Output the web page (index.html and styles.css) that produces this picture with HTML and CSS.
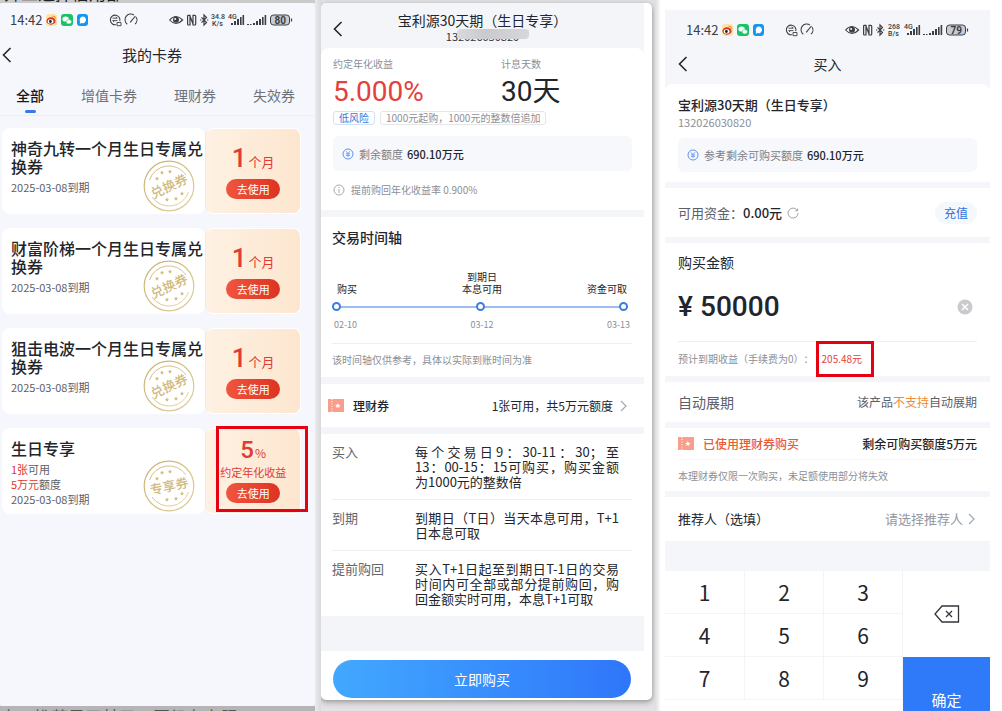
FILE: index.html
```html
<!DOCTYPE html>
<html lang="zh-CN">
<head>
<meta charset="utf-8">
<meta name="viewport" content="width=device-width, initial-scale=1">
<title>我的卡券</title>
<link rel="stylesheet" href="styles.css">
</head>
<body>
<svg class="defs" aria-hidden="true">
  <defs>
    <linearGradient id="gold" x1="0" y1="0" x2="1" y2="1">
      <stop offset="0" stop-color="#c9b173"/><stop offset="1" stop-color="#e0cf9c"/>
    </linearGradient>
    <symbol id="status" viewBox="0 0 250 16">
      <rect x="1" y="2" width="11" height="12" rx="3" fill="#fde3a7"/>
      <ellipse cx="6" cy="9" rx="4.6" ry="3.7" fill="#d9331f"/>
      <ellipse cx="5.6" cy="9.4" rx="2.9" ry="2.2" fill="#fff"/>
      <circle cx="5.4" cy="9.5" r="1.4" fill="#222"/>
      <path d="M7.5 4.2q3-.6 3.3 2.4" fill="none" stroke="#e8882a"/>
      <rect x="16" y="2" width="12" height="12" rx="3" fill="#16c464"/>
      <ellipse cx="20.6" cy="7" rx="3.2" ry="2.6" fill="#fff"/>
      <ellipse cx="23.8" cy="9.8" rx="2.7" ry="2.2" fill="#fff" stroke="#16c464" stroke-width=".5"/>
      <rect x="32" y="2" width="11" height="12" rx="3" fill="#1296f0"/>
      <path d="M37.7 4.6a3.5 3.3 0 1 1-1 6.5l-2 .6.4-2a3.4 3.4 0 0 1 2.6-5.1z" fill="#fff"/>
      <g fill="none" stroke="#3b3e44" stroke-width="1.1">
        <path d="M74.8 9.2A4.8 4.8 0 1 0 71 12.7"/>
        <path d="M67.500 6.200h4.800l-1.500-1.500M72.500 8.600h-4.800l1.500 1.500" stroke-width=".9"/>
        <path d="M72 10.500h4v3.200h-4z" stroke-width=".9"/>
        <path d="M82.300 12.200A5.400 5.400 0 0 1 89 3.100M91 5a5.400 5.400 0 0 1-1 7.200M85.200 10.400 90.400 4"/>
        <path d="M124.600 8Q131 1 137.600 8 131 15 124.600 8z"/>
      </g>
      <circle cx="131" cy="7.8" r="3" fill="#3b3e44"/><circle cx="130.200" cy="7" r="1" fill="#f5f7fb"/>
      <g fill="none" stroke="#3b3e44" stroke-width="1.2">
        <path d="M145 3.300h-1.600q-.8 0-.8.8v8q0 .9.8.9h1.600zM148 3.300h1.800q.9 0 .9.9v7.900q0 .9-.9.9H148zM145 4l3.200 8.500"/>
        <path d="m156.500 5.300 5 5.200-2.500 2.600V3l2.500 2.400-5 5.200" stroke-width="1.2"/>
        <path d="M155 8h1.300M162 8h1.300" stroke-width="1.2"/>
      </g>
      <path d="M186 11h2v2h-2zM189 9h2v4h-2zM192 7h2v6h-2zM195 5h1.600v8H195zM197.500 3h1.600v10h-1.600z" fill="#3b3e44"/>
      <path d="M202 12h2v1h-2zM205 12h1.500v1H205zM208 11h2v2h-2zM211 9h2v4h-2zM214 7h2v6h-2zM217 5h1.600v8H217zM219.600 3h1.600v10h-1.600z" fill="#3b3e44"/>
      <rect x="225.500" y="3" width="19" height="10" rx="3" fill="#c9ccd2" stroke="#3b3e44"/>
      <path d="M246.500 6.500v3" stroke="#3b3e44" stroke-width="1.2"/>
    </symbol>
    <symbol id="back" viewBox="0 0 10 16"><path d="M8.500 1 1.500 8l7 7" fill="none" stroke="#23262c" stroke-width="1.6"/></symbol>
    <symbol id="chevron" viewBox="0 0 8 12"><path d="m1 1 5 5-5 5" fill="none" stroke="#a4a8b0" stroke-width="1.2"/></symbol>
    <symbol id="yuan" viewBox="0 0 12 12">
      <circle cx="6" cy="6" r="5" fill="none" stroke="#5b93ee"/>
      <path d="M4 3.200 6 5.500l2-2.300M6 5.500V9M3.900 5.800h4.200M3.900 7.400h4.200" fill="none" stroke="#5b93ee" stroke-width=".8"/>
    </symbol>
    <symbol id="ticket" viewBox="0 0 16 13">
      <path d="M0 0h3.500v1h1V0H16v13H4.500v-1h-1v1H0z" fill="#f99d8d"/>
      <path d="M4 2v9" stroke="#fff" stroke-dasharray="1 1.500"/>
      <path d="m9.800 4 .8 1.700 1.900.2-1.400 1.300.4 1.900-1.700-1-1.700 1 .4-1.900-1.400-1.300 1.900-.2z" fill="#fff"/>
    </symbol>
    <symbol id="seal" viewBox="0 0 52 52">
      <g fill="none" stroke="url(#gold)">
        <circle cx="26" cy="26" r="24.800" stroke-width="1.200"/>
        <path d="M6.500 20A20.500 20.500 0 0 1 43 15M45.500 32A20.500 20.500 0 0 1 9 37" stroke-width=".9"/>
      </g>
      <g fill="#d2bc82">
        <path id="star" d="m19 10.500.6 1.300 1.400.2-1 1 .2 1.400-1.200-.7-1.200.7.200-1.400-1-1 1.400-.2z"/>
        <use href="#star" x="8" y="-1"/><use href="#star" x="-5" y="6"/>
        <use href="#star" x="14" y="26"/><use href="#star" x="5" y="27"/><use href="#star" x="20" y="21"/>
      </g>
    </symbol>
  </defs>
</svg>

<main class="board">
  <section class="column column-coupons">
    <p class="backdrop backdrop-top" aria-hidden="true">开工选择信用部</p>
    <div class="screen coupons">
      <div class="status"><span>14:42</span>
        <svg viewBox="0 0 250 16"><use href="#status"/><text x="166" y="7">34.8</text><text x="167" y="14">K/s</text><text x="183" y="7">4G</text><text class="charge" x="229.500" y="11.500">80</text></svg>
      </div>
      <header class="bar"><button class="back" aria-label="返回"><svg><use href="#back"/></svg></button><h1>我的卡券</h1></header>
      <nav class="tabs">
        <a class="current" href="#all">全部</a><a href="#value">增值卡券</a><a href="#finance">理财券</a><a href="#expired">失效券</a>
      </nav>
      <ul class="cards">
        <li class="card">
          <div class="card-info"><h2>神奇九转一个月生日专属兑换券</h2><p>2025-03-08到期</p>
            <svg class="seal" viewBox="0 0 52 52"><use href="#seal"/><text x="26" y="31" transform="rotate(-25 26 26)">兑换券</text></svg></div>
          <div class="card-value"><p class="amount"><b>1</b>个月</p><button class="use">去使用</button></div>
        </li>
        <li class="card">
          <div class="card-info"><h2>财富阶梯一个月生日专属兑换券</h2><p>2025-03-08到期</p>
            <svg class="seal" viewBox="0 0 52 52"><use href="#seal"/><text x="26" y="31" transform="rotate(-25 26 26)">兑换券</text></svg></div>
          <div class="card-value"><p class="amount"><b>1</b>个月</p><button class="use">去使用</button></div>
        </li>
        <li class="card">
          <div class="card-info"><h2>狙击电波一个月生日专属兑换券</h2><p>2025-03-08到期</p>
            <svg class="seal" viewBox="0 0 52 52"><use href="#seal"/><text x="26" y="31" transform="rotate(-25 26 26)">兑换券</text></svg></div>
          <div class="card-value"><p class="amount"><b>1</b>个月</p><button class="use">去使用</button></div>
        </li>
        <li class="card">
          <div class="card-info"><h2>生日专享</h2><p><em>1张</em>可用</p><p><em>5万元</em>额度</p><p>2025-03-08到期</p>
            <svg class="seal" viewBox="0 0 52 52"><use href="#seal"/><text x="26" y="31" transform="rotate(-12 26 26)">专享券</text></svg></div>
          <div class="card-value rate marked"><p class="amount"><b>5</b>%</p><p class="caption">约定年化收益</p><button class="use">去使用</button></div>
        </li>
      </ul>
    </div>
    <p class="backdrop backdrop-bottom" aria-hidden="true">水～推荐是无其已；国级左右限</p>
  </section>

  <section class="column column-product">
    <div class="sheet">
      <div class="screen product">
        <header class="bar product-bar"><button class="back" aria-label="返回"><svg><use href="#back"/></svg></button>
          <div><h1>宝利源30天期（生日专享）</h1><p class="code">132026030820</p></div></header>
        <div class="panel summary">
          <dl class="figures">
            <div><dt>约定年化收益</dt><dd class="red">5.000%</dd></div>
            <div><dt>计息天数</dt><dd class="days">30天</dd></div>
          </dl>
          <p class="tags"><span class="tag blue">低风险</span><span class="tag">1000元起购，1000元的整数倍追加</span></p>
          <p class="quota"><svg><use href="#yuan"/></svg><span>剩余额度</span> <b>690.10万元</b></p>
          <p class="hint"><svg viewBox="0 0 12 12"><circle cx="6" cy="6" r="5"/><path d="M6 5v4M6 3v1"/></svg>提前购回年化收益率 0.900%</p>
        </div>
        <div class="panel schedule">
          <h2>交易时间轴</h2>
          <div class="steps"><span>购买</span><span>到期日<br>本息可用</span><span>资金可取</span></div>
          <div class="track"><i></i><i></i><i></i></div>
          <div class="steps dates"><span>02-10</span><span>03-12</span><span>03-13</span></div>
          <p class="note">该时间轴仅供参考，具体以实际到账时间为准</p>
        </div>
        <button class="panel voucher"><svg class="ticket"><use href="#ticket"/></svg><strong>理财券</strong><span>1张可用，共5万元额度</span><svg class="chevron"><use href="#chevron"/></svg></button>
        <dl class="panel rules">
          <div><dt>买入</dt><dd>每个交易日9：30-11：30；至<span class="keep">13：00</span>-15：15可购买，购买金额为1000元的整数倍</dd></div>
          <div><dt>到期</dt><dd>到期日（T日）当天本息可用，T+1日本息可取</dd></div>
          <div><dt>提前购回</dt><dd>买入T+1日起至到期日T-1日的交易时间内可全部或部分提前购回，购回金额实时可用，本息T+1可取</dd></div>
        </dl>
      </div>
      <footer class="footer"><button class="buy">立即购买</button></footer>
    </div>
  </section>

  <section class="column column-order">
    <div class="screen order">
      <div class="status"><span>14:42</span>
        <svg viewBox="0 0 250 16"><use href="#status"/><text x="167" y="7">268</text><text x="167" y="14">B/s</text><text x="183" y="7">4G</text><text class="charge" x="229.500" y="11.500">79</text></svg>
      </div>
      <header class="bar"><button class="back" aria-label="返回"><svg><use href="#back"/></svg></button><h1>买入</h1></header>
      <div class="stack">
        <div class="panel item">
          <h2>宝利源30天期（生日专享）</h2><p class="code">132026030820</p>
          <p class="quota"><svg><use href="#yuan"/></svg><span>参考剩余可购买额度</span> <b>690.10万元</b></p>
        </div>
        <div class="panel row funds"><span>可用资金：</span><b>0.00元</b>
          <svg viewBox="0 0 12 12"><path d="M10.300 3.500A5 5 0 1 0 11 6M10.600 1.500v2.300H8.300"/></svg>
          <button class="recharge">充值</button></div>
        <div class="panel purchase">
          <label for="amount">购买金额</label>
          <div class="entry"><span>¥</span><input id="amount" type="text" inputmode="decimal" value="50000">
            <button class="clear" aria-label="清除"><svg viewBox="0 0 16 16"><circle cx="8" cy="8" r="7.500"/><path d="m5 5 6 6M11 5l-6 6"/></svg></button></div>
          <p class="estimate">预计到期收益（手续费为0）：<span class="marked">205.48元</span></p>
        </div>
        <div class="panel row renewal"><span>自动展期</span><span>该产品<em>不支持</em>自动展期</span></div>
        <div class="panel used">
          <div class="row"><svg class="ticket"><use href="#ticket"/></svg><strong>已使用理财券购买</strong><b>剩余可购买额度5万元</b></div>
          <p>本理财券仅限一次购买，未足额使用部分将失效</p>
        </div>
        <button class="panel row referrer"><span>推荐人（选填）</span><span>请选择推荐人</span><svg class="chevron"><use href="#chevron"/></svg></button>
      </div>
      <div class="keypad">
        <button>1</button><button>2</button><button>3</button>
        <button class="erase" aria-label="删除"><svg viewBox="0 0 26 18"><path d="M8 1h16.500v16H8L1 9z"/><path d="m12 6 6 6M18 6l-6 6"/></svg></button>
        <button>4</button><button>5</button><button>6</button>
        <button class="confirm">确定</button>
        <button>7</button><button>8</button><button>9</button>
      </div>
    </div>
  </section>
</main>
</body>
</html>
```

FILE: styles.css
```css
* { box-sizing: border-box; margin: 0; padding: 0; }
body {
  height: 100vh;
  overflow: hidden;
  background: #fff;
  color: #22252b;
  font: 12px/16px "Noto Sans CJK SC", "Noto Sans", sans-serif;
  text-spacing-trim: space-all;
}
button, input { font: inherit; color: inherit; background: none; border: 0; }
button { cursor: pointer; }
a { color: inherit; text-decoration: none; }
ul { list-style: none; }
em { font-style: normal; }
h1, h2, b, strong { font-weight: 400; }
svg { display: block; flex: none; }
.defs { position: absolute; width: 0; height: 0; }

.board {
  display: grid;
  grid-template-columns: 321fr 334fr 347fr;
  height: 100vh;
}
.column { min-width: 0; height: 100vh; overflow: hidden; }

/* Shared bars */
.status { display: flex; align-items: center; padding-left: 10px; font-size: 13px; color: #3b3e44; }
.status span { width: 35px; }
.status svg { width: 250px; height: 16px; }
.status text { font: 500 7px Roboto, sans-serif; fill: #3b3e44; }
.status .charge { font-size: 10px; font-weight: 700; }
.bar { display: grid; grid-template-columns: 20px 1fr 20px; align-items: center; text-align: center; }
.bar h1 { font-size: 15px; line-height: 20px; }
.back svg { width: 10px; height: 16px; }
.marked { position: relative; }
.marked::after {
  content: "";
  position: absolute;
  border: 3px solid #e60012;
  pointer-events: none;
}
.ticket { width: 16px; height: 13px; }
.chevron { width: 8px; height: 12px; }
.panel { background: #fff; }

/* Coupons */
.column-coupons {
  display: flex;
  flex-direction: column;
  padding-right: 6px;
  background: linear-gradient(90deg, #ececee 98%, #d9d9db);
}
.backdrop { flex: none; overflow: hidden; background: #cbcbcb; color: #555; font-size: 17px; white-space: nowrap; }
.backdrop-top { display: flex; align-items: flex-end; height: 3px; padding-left: 4px; line-height: 20px; color: #222; }
.backdrop-bottom { height: 5px; line-height: 22px; background: #b5b5b5; }
.coupons { flex: 1; background: #f5f7fc; border-radius: 4px; }
.coupons .status { height: 34px; }
.coupons .bar { height: 36px; padding-right: 11px; }
.coupons .back { padding-left: 2px; }
.tabs {
  display: flex;
  justify-content: space-between;
  padding: 12px 20px 0 16px;
  border-bottom: 1px solid #eceef3;
  font-size: 14px;
  line-height: 20px;
  color: #6d717a;
}
.tabs a { display: flex; flex-direction: column; align-items: center; height: 30px; }
.tabs a::after { content: ""; width: 11px; height: 3px; margin-top: 5px; border-radius: 2px; }
.tabs .current { color: #17191e; font-weight: 500; }
.tabs .current::after { background: #3878e8; }
.cards { display: grid; gap: 14px; padding: 12px 14px 0 2px; }
.card { display: grid; grid-template-columns: 204fr 96fr; height: 86px; }
.card-info { position: relative; padding: 11px 0 0 9px; background: #fff; border-radius: 8px; }
.card-info h2 { margin-bottom: 5px; font-size: 16px; font-weight: 500; line-height: 18px; }
.card-info p { font-size: 11px; line-height: 15px; color: #5d6068; }
.card em { color: #e0352c; }
.seal { position: absolute; right: 10px; bottom: 2px; width: 52px; height: 52px; }
.seal text { font-size: 13px; font-weight: 500; fill: #d0b97f; text-anchor: middle; }
.card-value {
  display: flex;
  flex-direction: column;
  align-items: center;
  padding-top: 16px;
  border: 1px solid #fff;
  border-left: 1px dashed #fbe9d6;
  border-radius: 8px;
  background: linear-gradient(90deg, #fef1e3, #fde6cf);
  color: #e23a34;
}
.amount { margin-bottom: 4px; font-size: 13px; line-height: 26px; }
.amount b { margin-right: 2px; font: 500 26px/26px Roboto, sans-serif; }
.use {
  width: 54px;
  height: 20px;
  border-radius: 10px;
  background: linear-gradient(90deg, #f0553f, #dd3322);
  color: #fff;
  font-size: 11px;
  line-height: 18px;
}
.rate { padding-top: 9px; }
.rate .amount { margin: 0; font-size: 12px; line-height: 24px; }
.rate .amount b { margin-right: 1px; font-size: 24px; line-height: 24px; }
.caption { margin-bottom: 4px; font-size: 11px; line-height: 14px; }
.rate::after { inset: -3px -8px 1px 10px; }

/* Product sheet */
.column-product { padding: 3px 3px 5px 0; background: #e3e3e5; }
.sheet {
  display: flex;
  flex-direction: column;
  min-height: 697px;
  border-radius: 5px;
  overflow: hidden;
  background: #fff;
  box-shadow: 0 1px 2px #aaa, 0 2px 6px #999;
}
.product { display: grid; gap: 7px; align-content: start; margin-right: 8px; padding-bottom: 35px; background: #f4f5f9; }
.product-bar { height: 45px; margin-bottom: -7px; padding: 5px 10px 0; align-items: start; }
.product-bar .back { padding: 13px 0 0 2px; }
.product-bar h1 { margin-top: 3px; font-size: 14px; line-height: 18px; }
.product-bar .code { position: relative; color: #33363c; font-size: 11px; line-height: 14px; }
.product-bar .code::after {
  content: "";
  position: absolute;
  left: 50%;
  top: 0;
  width: 72px;
  height: 10px;
  margin-left: -26px;
  border-radius: 4px;
  background: linear-gradient(90deg, #d9dade, #c9cace 40%, #d6d7db);
}
.summary { padding: 9px 12px 13px; border-radius: 8px 8px 0 0; }
.figures { display: grid; grid-template-columns: 168fr 131fr; }
.figures dt { font-size: 10px; line-height: 14px; color: #8b8f97; }
.figures dd { margin-top: 7px; font: 28px/28px Roboto, "Noto Sans CJK SC", sans-serif; white-space: nowrap; }
.red { color: #e5403a; }
.tags { display: flex; gap: 5px; margin-top: 5px; }
.tag { padding: 0 5px; border: 1px solid #e4e6ea; border-radius: 3px; font-size: 10px; line-height: 12px; color: #8b8f97; white-space: nowrap; }
.tag.blue { color: #3475d8; border-color: #d3e1f7; }
.quota { display: flex; align-items: center; height: 35px; padding-left: 9px; border-radius: 6px; background: #f7f8fb; font-size: 11px; }
.quota svg { width: 12px; height: 12px; margin-right: 5px; }
.quota span { margin-right: 4px; color: #7c8089; }
.quota b { font-weight: 500; }
.summary .quota { margin-top: 11px; }
.hint { display: flex; gap: 6px; align-items: center; margin-top: 12px; font-size: 10px; line-height: 14px; color: #8b8f97; }
.hint svg { width: 12px; height: 12px; fill: none; stroke: #a5a9b0; }
.schedule { padding: 10px 12px 0 11px; }
.schedule h2 { font-size: 14px; font-weight: 500; line-height: 20px; }
.steps {
  display: grid;
  grid-template-columns: 1fr auto 1fr;
  align-items: end;
  margin-top: 24px;
  padding: 0 5px;
  font-size: 10px;
  line-height: 12px;
  text-align: center;
}
.steps span:first-child { text-align: left; }
.steps span:last-child { text-align: right; }
.track { display: flex; justify-content: space-between; margin: 7px 4px 0 0; background: linear-gradient(#9cbcf2, #9cbcf2) center / 100% 2px no-repeat; }
.track i { width: 9px; height: 9px; border: 2px solid #3f7ce0; border-radius: 50%; background: #fff; }
.dates { margin-top: 8px; padding: 0 2px; font-size: 9px; color: #8b8f97; }
.note { margin-top: 12px; padding: 9px 0 10px; border-top: 1px solid #eeeff2; font-size: 10px; line-height: 14px; color: #8b8f97; }
.voucher { display: flex; align-items: center; height: 43px; padding: 0 16px 0 7px; text-align: left; }
.voucher strong { margin-left: 9px; font-weight: 500; }
.voucher span { margin-left: auto; margin-right: 7px; }
.rules { padding: 0 12px 0 11px; }
.rules div { display: grid; grid-template-columns: 83fr 204fr; padding: 10px 13px 10px 0; border-bottom: 1px solid #eeeff2; font-size: 13px; line-height: 15px; }
.rules div:last-child { border: 0; }
.rules dt { color: #63666e; }
.rules dd { text-align: justify; }
.keep { white-space: nowrap; }
.footer { padding: 9px 21px 1px 12px; }
.buy { display: block; width: 100%; height: 38px; border-radius: 19px; background: linear-gradient(90deg, #42a8ff, #2f76fa); color: #fff; font-size: 14px; }

/* Purchase order */
.column-order { padding: 10px 12px 0 10px; background: linear-gradient(90deg, #dcdcde, #fff 6px); }
.order { background: #f4f6fa; }
.order .status { height: 40px; padding-left: 21px; }
.order .bar { height: 28px; margin-bottom: 6px; padding: 0 13px; }
.order .bar h1 { font-size: 14px; }
.order .back { justify-self: start; }
.stack { display: grid; grid-template-columns: minmax(0, 1fr); gap: 6px; padding-bottom: 30px; }
.row { display: flex; align-items: center; }
.order .panel { width: 100%; padding: 0 13px; }
.order .item { padding: 12px 13px 10px; border-radius: 8px 8px 0 0; }
.item h2 { font-size: 13px; font-weight: 500; line-height: 18px; }
.item .code { margin: 0 0 8px; font-size: 11px; color: #8b8f97; }
.item .quota { height: 34px; }
.funds { height: 49px; font-size: 13px; color: #5d6068; }
.funds b { color: #22252b; font-weight: 500; }
.funds svg { width: 12px; height: 12px; margin-left: 5px; fill: none; stroke: #a0a3a9; }
.recharge { width: 42px; height: 22px; margin-left: auto; border-radius: 11px; background: #f5f8fb; color: #2f73dc; font-size: 12px; }
.order .purchase { padding-top: 9px; }
.purchase label { display: block; font-size: 14px; line-height: 20px; }
.entry { display: flex; align-items: center; height: 36px; margin: 17px 0 16px; font: 500 28px/36px Roboto, sans-serif; }
.entry span { width: 22px; }
.entry input { flex: 1; min-width: 0; outline: 0; }
.clear { width: 16px; height: 16px; margin-right: 4px; }
.clear circle { fill: #c9cacd; }
.clear path { stroke: #fff; stroke-width: 1.5; }
.estimate { display: flex; align-items: center; height: 35px; border-top: 1px solid #eeeff2; font-size: 10px; color: #8b8f97; white-space: nowrap; }
.estimate .marked { margin-left: 8px; color: #e04338; }
.estimate .marked::after { inset: -10px -12px -10px -6px; }
.renewal { justify-content: space-between; height: 40px; color: #5d6068; }
.renewal span:first-child { font-size: 14px; }
.renewal em { color: #f08a30; }
.used .row { height: 31px; }
.used strong { margin-left: 9px; color: #ea5a35; font-weight: 500; }
.used b { margin-left: auto; font-weight: 500; }
.used p { border-top: 1px solid #f7f7f9; font-size: 10px; line-height: 31px; color: #8b8f97; }
.referrer { height: 44px; font-size: 13px; }
.referrer span + span { margin-left: auto; margin-right: 5px; color: #9498a1; }
.order .referrer { padding-right: 14px; }
.keypad { display: grid; grid-template-columns: 80fr 79fr 79fr 87fr; grid-template-rows: repeat(4, 43px); background: #fff; font-size: 21px; }
.keypad button { border-right: 1px solid #f3f4f6; border-bottom: 1px solid #f3f4f6; }
.keypad .erase, .keypad .confirm { grid-column: 4; border: 0; }
.erase { display: grid; place-items: center; }
.erase svg { width: 26px; height: 18px; fill: none; stroke: #33363c; stroke-width: 1.3; }
.keypad .erase { grid-row: 1 / span 2; }
.keypad .confirm { grid-row: 3 / span 2; background: #2f7af8; color: #fff; font-size: 15px; }
```
